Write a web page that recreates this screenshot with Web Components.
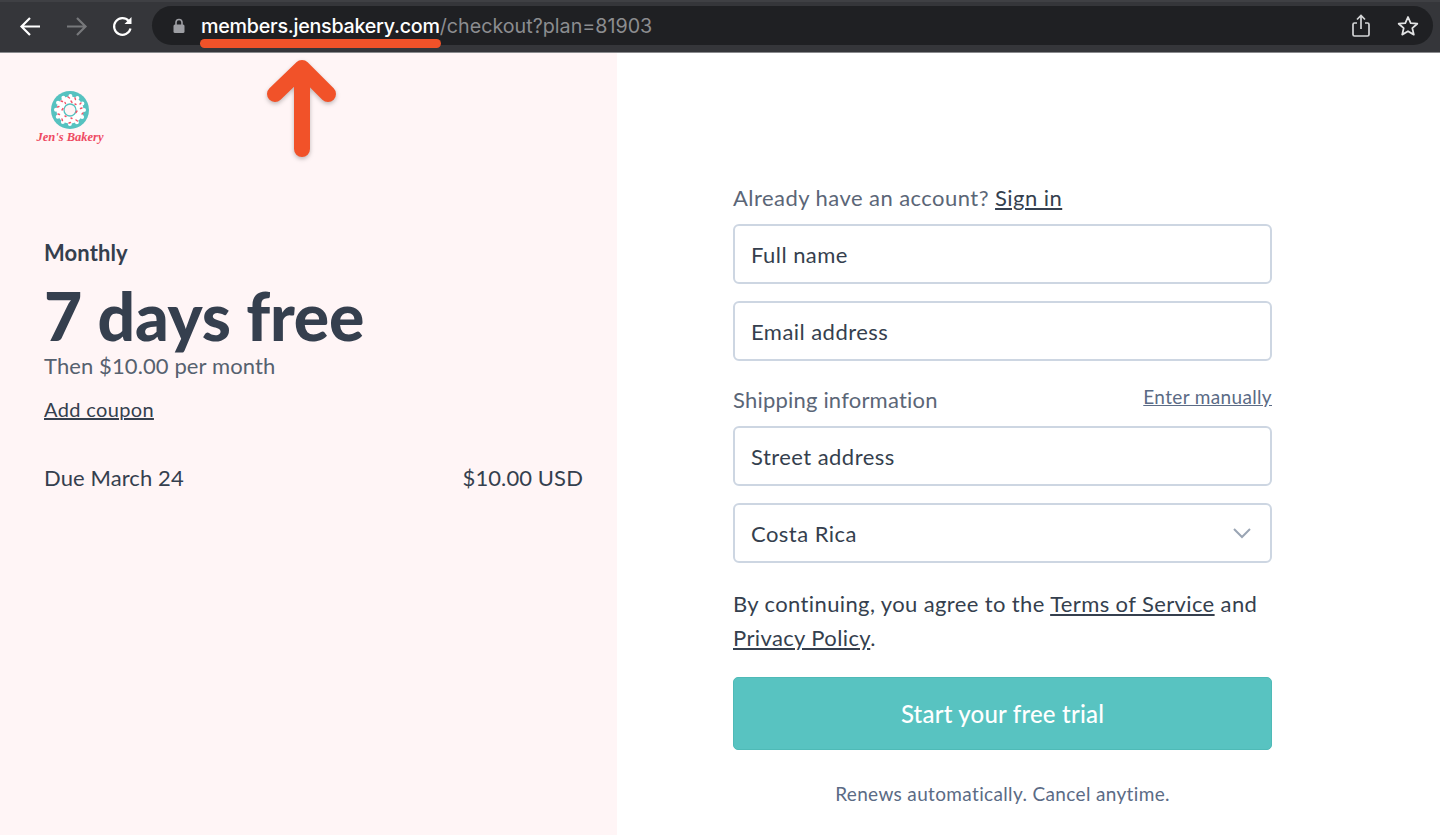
<!DOCTYPE html>
<html>
<head>
<meta charset="utf-8">
<title>Jen's Bakery checkout</title>
<style>
    html,body{margin:0;height:835px;overflow:hidden;background:#fff;}
    body{font-family:"Lato","Liberation Sans",sans-serif;color:#353f4e;display:flex;flex-direction:column;}
    .page{display:flex;flex:1;position:relative;}
</style>
</head>
<body>
<template id="barTemplate">
    <style>
        :host{display:flex;align-items:center;flex:none;height:53px;box-sizing:border-box;background:#35363a;border-top:2px solid #3f4044;border-bottom:1px solid #8a8b8e;padding:0 7px 0 19px;position:relative;font-family:"Inter","Liberation Sans",sans-serif;}
        .nav{display:flex;gap:23px;align-items:center;width:133px;flex:none;margin-top:-2px;}
        svg{display:block;flex:none;}
        .url{flex:1;height:39px;border-radius:20px;background:#1f2023;display:flex;align-items:center;padding:0 14px 0 20px;margin-top:-3px;}
        .text{margin-left:15px;font-size:19.7px;color:#8c8d90;white-space:nowrap;flex:1;}
        .text b{font-weight:500;color:#fff;letter-spacing:-.25px;}
        .actions{display:flex;align-items:center;gap:26px;}
    </style>
    <div class="nav">
        <svg width="23" height="23" viewBox="0 0 23 23" fill="none" stroke="#fff" stroke-width="2.2"><path d="M21 11.500H3M11 3l-8.500 8.500 8.500 8.500"/></svg>
        <svg width="23" height="23" viewBox="0 0 23 23" fill="none" stroke="#77787b" stroke-width="2.200"><path d="M2 11.500h18M12 3l8.500 8.500-8.500 8.500"/></svg>
        <svg width="23" height="23" viewBox="0 0 23 23" fill="none" stroke="#fff" stroke-width="2.200"><path d="M19.500 13.500a8.300 8.300 0 1 1-1.800-7.500"/><path d="M20.500 2v7H13.500z" fill="#fff" stroke="none"/></svg>
    </div>
    <div class="url">
        <svg width="14" height="16" viewBox="0 0 14 16"><path d="M4 7V4.500a3 3 0 0 1 6 0V7" fill="none" stroke="#9d9ea3" stroke-width="1.600"/><rect x="1.500" y="6.500" width="11" height="8.500" rx="1.500" fill="#9d9ea3"/></svg>
        <span class="text"><b>members.jensbakery.com</b>/checkout?plan=81903</span>
        <div class="actions">
            <svg width="20" height="24" viewBox="0 0 20 24" fill="none" stroke="#d4d5d7" stroke-width="1.700"><path d="M6 9H3.500a1.500 1.500 0 0 0-1.500 1.500v10A1.500 1.500 0 0 0 3.500 22h13a1.500 1.500 0 0 0 1.500-1.500v-10A1.500 1.500 0 0 0 16.500 9H14"/><path d="M10 15V2M6 5.500 10 1.500l4 4"/></svg>
            <svg width="22" height="22" viewBox="0 0 22 22" fill="none" stroke="#e2e3e4" stroke-width="1.800" stroke-linejoin="round"><path d="M11 2l2.700 6.100 6.600.6-5 4.400 1.500 6.500L11 16.200l-5.800 3.400 1.500-6.500-5-4.400 6.600-.6z"/></svg>
        </div>
    </div>
</template>

<template id="logoTemplate">
    <style>
        :host{display:flex;flex-direction:column;align-items:center;width:90px;}
        svg{display:block;}
        span{font-family:"Liberation Serif",serif;font-style:italic;font-weight:700;font-size:12.500px;line-height:14px;color:#ee4a62;margin-top:1px;white-space:nowrap;}
    </style>
    <svg width="38" height="38" viewBox="0 0 38 38">
        <circle cx="19" cy="19" r="19" fill="#56c2c0"/>
        <circle cx="19" cy="19" r="13.500" fill="#fff"/>
        <circle cx="19" cy="19" r="14" fill="none" stroke="#fff" stroke-width="4" stroke-linecap="round" stroke-dasharray="0 7.330"/>
        <circle cx="19" cy="19" r="6" fill="#fff5f6" stroke="#56c2c0" stroke-width="1.300"/>
        <g stroke="#f0566b" stroke-width="1.400" stroke-linecap="round">
            <path d="M17 6l1.500 1M24 7l.5 1.500M30 12l-1 1M10 10l1.500.5M6.500 16l1.500-.5M7 23l1.500.5M11 28l.5 1.500M18 32l1.500-.5M25 29l1.500 1M31 23l1 -1M31 17l-1.500 .5M11 19l1-1.500M26 20l-1 1.500M20 10l1 1.500M14 11.500l.5 1M24 13l1 .5M14 25l1 .5M20 27l1 .5"/>
        </g>
    </svg>
    <span><slot></slot></span>
</template>

<template id="summaryTemplate">
    <style>
        :host{display:block;width:617px;flex:none;box-sizing:border-box;background:#fff5f6;padding:38px 34px 0 44px;}
        .logo{margin-left:-19px;}
        .plan{margin-top:94px;font-size:22px;font-weight:700;letter-spacing:.1px;line-height:30px;color:#353f4e;}
        h1{margin:13px 0 0;font-size:66px;line-height:70px;font-weight:900;letter-spacing:-.2px;color:#353f4e;}
        .then{font-size:22px;letter-spacing:.1px;line-height:30px;color:#56616f;}
        a{display:inline-block;margin-top:13px;font-size:20px;letter-spacing:.35px;line-height:30px;color:#353f4e;text-decoration:underline;}
        .due{display:flex;justify-content:space-between;margin-top:39px;font-size:22px;letter-spacing:.1px;line-height:30px;color:#353f4e;}
    </style>
    <div class="logo"><slot name="logo"></slot></div>
    <div class="plan"><slot name="plan"></slot></div>
    <h1><slot name="headline"></slot></h1>
    <div class="then"><slot name="then"></slot></div>
    <a><slot name="coupon"></slot></a>
    <div class="due"><slot name="due"></slot><slot name="amount"></slot></div>
</template>

<template id="fieldTemplate">
    <style>
        :host{display:flex;align-items:center;justify-content:space-between;height:60px;box-sizing:border-box;border:2px solid #cdd6e2;border-radius:6px;background:#fff;padding:0 19px 0 16px;font-size:22px;letter-spacing:.45px;color:#353f4e;}
    </style>
    <span><slot></slot></span>
    <slot name="icon"></slot>
</template>

<template id="formTemplate">
    <style>
        :host{display:block;flex:1;padding:130px 168px 0 116px;color:#353f4e;}
        .label{font-size:22px;line-height:30px;letter-spacing:.45px;color:#5b6677;}
        .label a,.terms a{color:#353f4e;text-decoration:underline;}
        .fields{display:flex;flex-direction:column;gap:17px;margin-top:11px;}
        .shipping{display:flex;justify-content:space-between;align-items:flex-end;margin-top:23px;}
        .shipping .label{letter-spacing:.2px;}
        .manual{font-size:19px;line-height:26px;letter-spacing:.35px;color:#5b6b85;text-decoration:underline;margin-bottom:5px;}
        .terms{font-size:22px;line-height:34px;letter-spacing:.38px;margin-top:24px;}
        button{display:block;width:100%;height:73px;margin-top:22px;border:1px solid #4fbab7;border-radius:5px;background:#58c3c1;color:#fff;font:500 24px "Lato","Liberation Sans",sans-serif;letter-spacing:.2px;}
        .renews{text-align:center;font-size:19px;line-height:26px;letter-spacing:.35px;color:#5b6b85;margin-top:31px;}
    </style>
    <div class="label">Already have an account? <a>Sign in</a></div>
    <div class="fields">
        <text-field>Full name</text-field>
        <text-field>Email address</text-field>
    </div>
    <div class="shipping"><span class="label">Shipping information</span><a class="manual">Enter manually</a></div>
    <div class="fields">
        <text-field>Street address</text-field>
        <text-field>Costa Rica
            <svg slot="icon" width="18" height="11" viewBox="0 0 18 11" fill="none" stroke="#9aa5b4" stroke-width="2"><path d="M1 1l8 8 8-8"/></svg>
        </text-field>
    </div>
    <div class="terms">By continuing, you agree to the <a>Terms of Service</a> and<br><a>Privacy Policy</a>.</div>
    <button>Start your free trial</button>
    <div class="renews">Renews automatically. Cancel anytime.</div>
</template>

<template id="arrowTemplate">
    <style>
        :host{display:block;position:absolute;left:266px;top:7px;}
        svg{display:block;overflow:visible;}
    </style>
    <svg width="72" height="100" viewBox="0 0 72 100" fill="none" stroke="#f15229" stroke-width="16" stroke-linecap="round" stroke-linejoin="round" style="filter:drop-shadow(0 2px 2px rgba(0,0,0,.25))"><path d="M36 8v81M9 34 36 8l26 26"/></svg>
</template>

<template id="markTemplate">
    <style>
        :host{display:block;position:absolute;left:200px;top:39px;width:241px;height:9px;border-radius:5px;background:#f15229;}
    </style>
</template>

<browser-bar></browser-bar>
<url-mark></url-mark>
<div class="page">
    <plan-summary>
        <bakery-logo slot="logo">Jen's Bakery</bakery-logo>
        <span slot="plan">Monthly</span>
        <span slot="headline">7 days free</span>
        <span slot="then">Then $10.00 per month</span>
        <span slot="coupon">Add coupon</span>
        <span slot="due">Due March 24</span>
        <span slot="amount">$10.00 USD</span>
    </plan-summary>
    <checkout-form></checkout-form>
    <up-arrow></up-arrow>
</div>

<script>
    (function registerElements(customElements) {
        'use strict';

        // every element is only a template in a shadow root
        function define(tag, templateId) {
            class TemplateElement extends HTMLElement {
                constructor() {
                    super();
                    const shadowRoot = this.attachShadow({mode: 'open'});
                    const templ = document.querySelector('#' + templateId);
                    shadowRoot.appendChild(document.importNode(templ.content, true));
                }
            }
            customElements.define(tag, TemplateElement);
        }

        define('text-field', 'fieldTemplate');
        define('browser-bar', 'barTemplate');
        define('url-mark', 'markTemplate');
        define('bakery-logo', 'logoTemplate');
        define('plan-summary', 'summaryTemplate');
        define('checkout-form', 'formTemplate');
        define('up-arrow', 'arrowTemplate');
    })(window.customElements);
</script>
</body>
</html>
